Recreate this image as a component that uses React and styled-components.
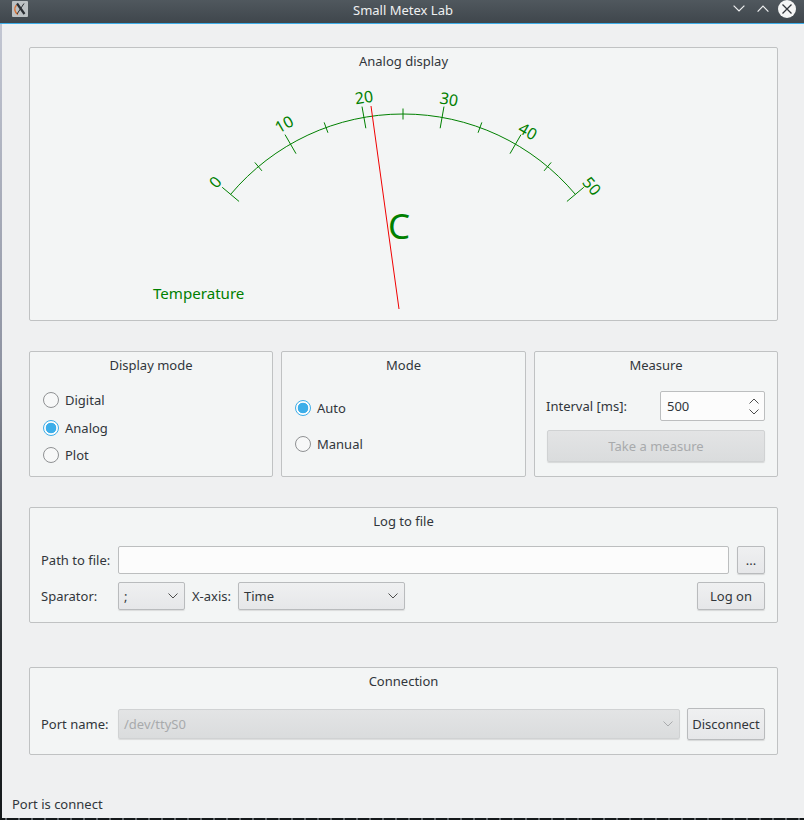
import React from "react";
import styled, { createGlobalStyle } from "styled-components";

const Global = createGlobalStyle`
  html, body {
    margin: 0;
    padding: 0;
    overflow: hidden;
  }
  body {
    width: 804px;
    height: 820px;
    font-family: "Noto Sans", sans-serif;
    font-size: 13px;
    color: #31363b;
    background: linear-gradient(#c6cad6 0, #8e93a2 45%, #2a2f33 78%, #14181a 100%);
  }
`;

const GREEN = "#008000";

const Chevron = ({ up, size = 10, color = "#4d4d4d", sw = 1 }) => (
  <svg width={size} height={size * 0.6} viewBox="0 0 10 6" fill="none">
    <path
      d={up ? "M0.5 5.5 L5 1 L9.5 5.5" : "M0.5 0.5 L5 5 L9.5 0.5"}
      stroke={color}
      strokeWidth={sw}
    />
  </svg>
);

function Gauge() {
  const cx = 403;
  const cy = 339;
  const r = 225;
  const pt = (deg, rad) => {
    const a = (deg * Math.PI) / 180;
    return [cx + rad * Math.sin(a), cy - rad * Math.cos(a)];
  };
  const ticks = [-50, -40, -30, -20, -10, 0, 10, 20, 30, 40, 50];
  const [ax, ay] = pt(-50, r);
  const [bx, by] = pt(50, r);
  const labels = [
    ["0", 215, 182, -50],
    ["10", 284, 124, -30],
    ["20", 364, 97, -8],
    ["30", 449, 99, 10],
    ["40", 528, 131, 30],
    ["50", 592, 186, 50],
  ];
  return (
    <GaugeSvg viewBox="30 71 747 249">
      <path
        d={`M${ax} ${ay} A${r} ${r} 0 0 1 ${bx} ${by}`}
        fill="none"
        stroke={GREEN}
        strokeWidth="1"
      />
      {ticks.map((t, i) => {
        const half = i % 2 === 0 ? 11 : 5.5;
        const [x1, y1] = pt(t, r - half);
        const [x2, y2] = pt(t, r + half);
        return <line key={t} x1={x1} y1={y1} x2={x2} y2={y2} stroke={GREEN} strokeWidth="1" />;
      })}
      {labels.map(([txt, x, y, rot]) => (
        <text
          key={txt}
          x={x}
          y={y}
          fill={GREEN}
          fontSize="16"
          textAnchor="middle"
          dominantBaseline="central"
          transform={`rotate(${rot} ${x} ${y})`}
        >
          {txt}
        </text>
      ))}
      <line x1="371" y1="106" x2="399" y2="309" stroke="#f00000" strokeWidth="1" />
      <text x="399" y="225" fill={GREEN} fontSize="35" textAnchor="middle" dominantBaseline="central">
        C
      </text>
      <text x="153" y="293" fill={GREEN} fontSize="15.1" dominantBaseline="central">
        Temperature
      </text>
    </GaugeSvg>
  );
}

function Radio({ label, checked }) {
  return (
    <RadioRow>
      <RadioDot $checked={checked} />
      <span>{label}</span>
    </RadioRow>
  );
}

export default function App() {
  return (
    <>
      <Global />
      <Win>
        <TitleBar>
          <AppIcon viewBox="0 0 16 16">
            <rect width="16" height="16" rx="1" fill="#bcc1c4" />
            <path d="M4.5 4 A6 6 0 0 0 6 13.5" fill="none" stroke="#d9743a" strokeWidth="1.5" />
            <path d="M5 2.5 L12.5 13" stroke="#2a2e33" strokeWidth="2.2" />
            <path d="M12 2.5 L5 13" stroke="#2a2e33" strokeWidth="1" />
          </AppIcon>
          <TitleText>Small Metex Lab</TitleText>
          <WinButtons>
            <WinBtn>
              <Chevron size={12} color="#eff0f1" />
            </WinBtn>
            <WinBtn>
              <Chevron up size={12} color="#eff0f1" />
            </WinBtn>
            <CloseBtn>
              <svg width="10" height="10" viewBox="0 0 10 10">
                <path d="M0.5 0.5 L9.5 9.5 M9.5 0.5 L0.5 9.5" stroke="#31363b" strokeWidth="1.3" />
              </svg>
            </CloseBtn>
          </WinButtons>
        </TitleBar>
        <Content>
          <Panel $h={274}>
            <PanelTitle>Analog display</PanelTitle>
            <Gauge />
          </Panel>
          <ThreeCols>
            <Panel>
              <PanelTitle>Display mode</PanelTitle>
              <RadioList $top={15} $gap={7.5}>
                <Radio label="Digital" />
                <Radio label="Analog" checked />
                <Radio label="Plot" />
              </RadioList>
            </Panel>
            <Panel>
              <PanelTitle>Mode</PanelTitle>
              <RadioList $top={23} $gap={16}>
                <Radio label="Auto" checked />
                <Radio label="Manual" />
              </RadioList>
            </Panel>
            <Panel>
              <PanelTitle>Measure</PanelTitle>
              <MeasureBody>
                <Row>
                  <span>Interval [ms]:</span>
                  <SpinBox>
                    500
                    <SpinArrows>
                      <Chevron up size={10} />
                      <Chevron size={10} />
                    </SpinArrows>
                  </SpinBox>
                </Row>
                <Button $disabled $h={32}>Take a measure</Button>
              </MeasureBody>
            </Panel>
          </ThreeCols>
          <Panel $h={116} $mt={30}>
            <PanelTitle>Log to file</PanelTitle>
            <LogBody>
              <Row>
                <FieldLabel>Path to file:</FieldLabel>
                <TextField />
                <Button $w={28}>...</Button>
              </Row>
              <Row>
                <FieldLabel>Sparator:</FieldLabel>
                <Combo $w={67}>
                  ;
                  <Chevron />
                </Combo>
                <InlineLabel>X-axis:</InlineLabel>
                <Combo $w={167}>
                  Time
                  <Chevron />
                </Combo>
                <Button $w={68} $push>Log on</Button>
              </Row>
            </LogBody>
          </Panel>
          <Panel $h={88} $mt={44}>
            <PanelTitle>Connection</PanelTitle>
            <ConnBody>
              <FieldLabel>Port name:</FieldLabel>
              <Combo $w={562} $h={30} $disabled>
                /dev/ttyS0
                <Chevron color="#a9abad" />
              </Combo>
              <Button $w={78} $h={32}>Disconnect</Button>
            </ConnBody>
          </Panel>
        </Content>
        <Status>Port is connect</Status>
      </Win>
      <DeskStrip />
    </>
  );
}

const Win = styled.div`
  width: 802px;
  height: 818px;
  margin-left: 2px;
  background: #eff0f1;
  display: flex;
  flex-direction: column;
`;

const TitleBar = styled.div`
  position: relative;
  height: 23px;
  margin-left: -2px;
  width: 804px;
  flex: none;
  display: flex;
  align-items: center;
  justify-content: center;
  background: linear-gradient(#50585e, #3f464c);
  border-bottom: 1px solid #3daee9;
`;

const AppIcon = styled.svg`
  position: absolute;
  left: 12px;
  top: 1px;
  width: 16px;
  height: 16px;
`;

const TitleText = styled.div`
  color: #eff0f1;
  font-size: 13px;
  line-height: 18px;
  margin-top: -4px;
  margin-left: 2px;
`;

const WinButtons = styled.div`
  position: absolute;
  right: 8px;
  top: 0;
  display: flex;
  align-items: center;
  height: 18px;
`;

const WinBtn = styled.div`
  width: 24px;
  display: flex;
  align-items: center;
  justify-content: center;
`;

const CloseBtn = styled.div`
  width: 18px;
  height: 18px;
  margin-left: 3px;
  border-radius: 50%;
  background: #f4f5f5;
  display: flex;
  align-items: center;
  justify-content: center;
`;

const Content = styled.div`
  padding: 23px 26px 0 27px;
  display: flex;
  flex-direction: column;
`;

const Panel = styled.section`
  box-sizing: border-box;
  background: #f3f5f5;
  border: 1px solid #c0c2c3;
  border-radius: 2px;
  display: flex;
  flex-direction: column;
  ${(p) => p.$h && `height: ${p.$h}px;`}
  ${(p) => p.$mt && `margin-top: ${p.$mt}px;`}
`;

const PanelTitle = styled.div`
  padding: 4px 0 1px;
  line-height: 18px;
  height: 18px;
  text-align: center;
  flex: none;
`;

const GaugeSvg = styled.svg`
  display: block;
  width: 747px;
  height: 249px;
  font-family: "Noto Sans", sans-serif;
`;

const ThreeCols = styled.div`
  margin-top: 30px;
  height: 126px;
  display: grid;
  grid-template-columns: 244px 245px 244px;
  column-gap: 8px;
`;

const RadioList = styled.div`
  padding: ${(p) => p.$top}px 0 0 13px;
  display: flex;
  flex-direction: column;
  gap: ${(p) => p.$gap}px;
`;

const RadioRow = styled.label`
  height: 20px;
  display: flex;
  align-items: center;
  gap: 6px;
`;

const RadioDot = styled.span`
  box-sizing: border-box;
  width: 16px;
  height: 16px;
  border-radius: 50%;
  border: 1px solid ${(p) => (p.$checked ? "#3daee9" : "#8f9193")};
  background: ${(p) =>
    p.$checked
      ? "radial-gradient(circle, #3daee9 0 5px, #fcfcfc 5.6px)"
      : "#f7f8f8"};
`;

const Row = styled.div`
  height: 28px;
  display: flex;
  align-items: center;
`;

const MeasureBody = styled.div`
  padding: 16px 12px 0 11px;
  display: flex;
  flex-direction: column;
  gap: 9px;
  ${Row} {
    height: 30px;
    justify-content: space-between;
  }
`;

const SpinBox = styled.div`
  box-sizing: border-box;
  width: 105px;
  height: 30px;
  padding: 0 5px 0 6px;
  background: #fcfcfc;
  border: 1px solid #bcbebf;
  border-radius: 2px;
  display: flex;
  align-items: center;
  justify-content: space-between;
`;

const SpinArrows = styled.div`
  display: flex;
  flex-direction: column;
  gap: 5px;
  svg {
    display: block;
  }
`;

const Button = styled.div`
  box-sizing: border-box;
  width: ${(p) => (p.$w ? `${p.$w}px` : "auto")};
  height: ${(p) => p.$h || 28}px;
  flex: none;
  display: flex;
  align-items: center;
  justify-content: center;
  border-radius: 2px;
  border: 1px solid #b9bbbd;
  box-shadow: 0 1px 1px rgba(0, 0, 0, 0.12);
  background: linear-gradient(#eff0f1, #e6e7e9);
  ${(p) => p.$push && "margin-left: auto;"}
  ${(p) =>
    p.$disabled &&
    `
    margin-left: 1px;
    color: #a8aaac;
    border-color: #d0d2d3;
    background: linear-gradient(#e3e4e5, #dadcdd);
  `}
`;

const LogBody = styled.div`
  padding: 15px 12px 0 11px;
  display: flex;
  flex-direction: column;
  gap: 8px;
`;

const FieldLabel = styled.span`
  width: 77px;
  flex: none;
`;

const InlineLabel = styled.span`
  width: 46px;
  margin-left: 7px;
  flex: none;
`;

const TextField = styled.div`
  box-sizing: border-box;
  flex: 1;
  height: 28px;
  margin-right: 8px;
  background: #fcfcfc;
  border: 1px solid #bcbebf;
  border-radius: 2px;
`;

const Combo = styled.div`
  box-sizing: border-box;
  width: ${(p) => p.$w}px;
  height: ${(p) => p.$h || 28}px;
  flex: none;
  padding: 0 6px 0 5px;
  display: flex;
  align-items: center;
  justify-content: space-between;
  border-radius: 2px;
  border: 1px solid ${(p) => (p.$disabled ? "#d0d2d3" : "#b9bbbd")};
  box-shadow: 0 1px 1px rgba(0, 0, 0, 0.1);
  color: ${(p) => (p.$disabled ? "#a8aaac" : "#31363b")};
  background: ${(p) =>
    p.$disabled
      ? "linear-gradient(#e3e4e5, #dadcdd)"
      : "linear-gradient(#eff0f1, #e6e7e9)"};
`;

const ConnBody = styled.div`
  padding: 17px 12px 0 11px;
  display: flex;
  align-items: center;
  gap: 0;
  ${Button} {
    margin-left: 7px;
  }
`;

const Status = styled.div`
  margin-top: auto;
  margin-bottom: 5px;
  padding-left: 10px;
  line-height: 18px;
`;

const DeskStrip = styled.div`
  height: 2px;
  background: repeating-linear-gradient(90deg, #14181a 0 5px, #5d6266 5px 7px, #14181a 7px 13px);
`;
